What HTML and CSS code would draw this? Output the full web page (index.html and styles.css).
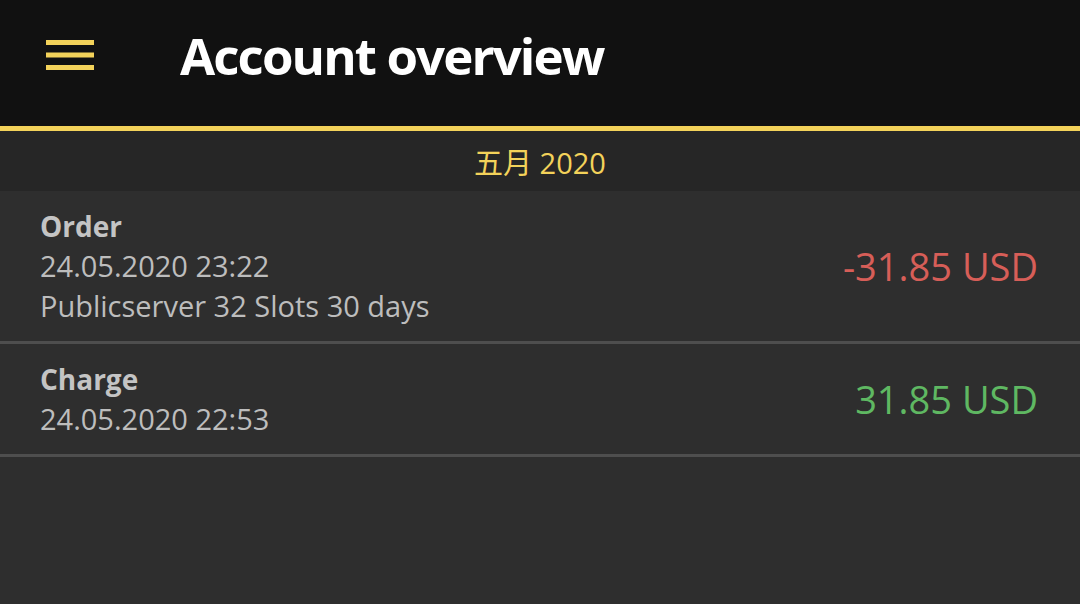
FILE: index.html
```html
<!DOCTYPE html>
<html>
<head>
<meta charset="utf-8">
<link rel="stylesheet" href="styles.css">
</head>
<body>
<header class="topbar">
  <div class="menu-btn">
    <svg width="48" height="30" viewBox="0 0 48 30"><rect x="0" y="0" width="48" height="5" fill="#f3d25a"/><rect x="0" y="12.5" width="48" height="5" fill="#f3d25a"/><rect x="0" y="25" width="48" height="5" fill="#f3d25a"/></svg>
  </div>
  <h1 class="title">Account overview</h1>
</header>
<div class="month">五月 2020</div>
<ul class="list">
  <li class="item">
    <div class="info">
      <div class="kind">Order</div>
      <div class="line">24.05.2020 23:22</div>
      <div class="line">Publicserver 32 Slots 30 days</div>
    </div>
    <div class="amount neg">-31.85 USD</div>
  </li>
  <li class="item">
    <div class="info">
      <div class="kind">Charge</div>
      <div class="line">24.05.2020 22:53</div>
    </div>
    <div class="amount pos">31.85 USD</div>
  </li>
</ul>
</body>
</html>
```
FILE: styles.css
```css
html, body {
  margin: 0;
  padding: 0;
  width: 1080px;
  height: 604px;
  overflow: hidden;
  background: #2e2e2e;
  font-family: "Open Sans", "Noto Sans", "Noto Sans CJK SC", sans-serif;
}
.topbar {
  height: 126px;
  background: #111111;
  border-bottom: 5px solid #f3d25a;
  display: flex;
  align-items: flex-start;
  padding-left: 46px;
  box-sizing: content-box;
}
.menu-btn {
  width: 48px;
  height: 30px;
  display: flex;
  margin-top: 40px;
}
.title {
  margin: 20px 0 0 86px;
  color: #ffffff;
  font-family: "Open Sans", sans-serif;
  font-weight: 700;
  font-size: 51px;
  line-height: 70px;
  letter-spacing: -1.9px;
}
.month {
  height: 60px;
  background: #262626;
  color: #f3d25a;
  font-size: 29px;
  display: flex;
  align-items: center;
  justify-content: center;
  font-family: "Open Sans", "Noto Sans CJK SC", sans-serif;
}
.list {
  list-style: none;
  margin: 0;
  padding: 0;
}
.item {
  display: flex;
  align-items: center;
  justify-content: space-between;
  padding: 15px 42px 15px 40px;
  border-bottom: 3px solid #4e4e4e;
  background: #2e2e2e;
}
.info {
  display: flex;
  flex-direction: column;
}
.kind {
  font-weight: 700;
  font-size: 28px;
  line-height: 40px;
  color: #c4c4c4;
}
.line {
  font-size: 29px;
  line-height: 40px;
  color: #bdbdbd;
}
.amount {
  font-size: 38px;
}
.neg { color: #d75e58; }
.pos { color: #5fb862; }
```
